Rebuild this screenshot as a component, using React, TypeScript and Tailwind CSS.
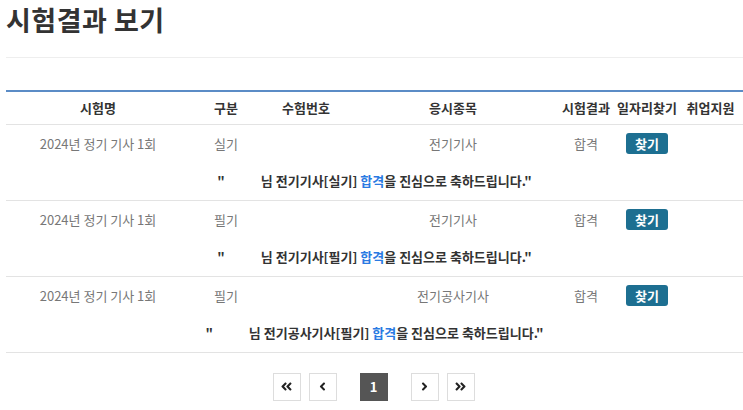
import React from 'react';
import { FaAngleDoubleLeft, FaAngleLeft, FaAngleRight, FaAngleDoubleRight } from 'react-icons/fa';

type Result = {
  round: string;
  kind: string;
  number: string;
  subject: string;
  result: string;
};

const results: Result[] = [
  { round: '2024년 정기 기사 1회', kind: '실기', number: '', subject: '전기기사', result: '합격' },
  { round: '2024년 정기 기사 1회', kind: '필기', number: '', subject: '전기기사', result: '합격' },
  { round: '2024년 정기 기사 1회', kind: '필기', number: '', subject: '전기공사기사', result: '합격' },
];

const headers = ['시험명', '구분', '수험번호', '응시종목', '시험결과', '일자리찾기', '취업지원'];

export default function App() {
  return (
    <div className="w-[743px] h-[410px] bg-white pl-[6px] text-[#333] overflow-hidden font-['Noto_Sans_CJK_KR','Noto_Sans',sans-serif]">
      {/* Title */}
      <h2 className="text-[27px] font-bold leading-[40px] text-[#333] tracking-[0.5px]">시험결과 보기</h2>
      <div className="mt-[17px] border-t border-[#eee]" />

      {/* Results table */}
      <table className="mt-[32px] w-[737px] table-fixed border-collapse text-[13px]">
        <colgroup>
          <col className="w-[184px]" />
          <col className="w-[72px]" />
          <col className="w-[88px]" />
          <col className="w-[206px]" />
          <col className="w-[60px]" />
          <col className="w-[62px]" />
          <col className="w-[65px]" />
        </colgroup>
        <thead>
          <tr className="border-t-2 border-[#5b8cc6] border-b border-b-[#e3e3e3]">
            {headers.map(h => (
              <th key={h} className="h-[33px] p-0 text-center font-bold text-[#333] whitespace-nowrap">{h}</th>
            ))}
          </tr>
        </thead>
        <tbody>
          {results.map((r, i) => (
            <React.Fragment key={i}>
              <tr className="text-[#777]">
                <td className="h-[38px] p-0 text-center">{r.round}</td>
                <td className="p-0 text-center">{r.kind}</td>
                <td className="p-0 text-center">{r.number}</td>
                <td className="p-0 text-center">{r.subject}</td>
                <td className="p-0 text-center">{r.result}</td>
                <td className="p-0 text-center">
                  <button className="w-[42px] h-[21px] rounded-[3px] bg-[#1d6f91] text-white text-[13px] font-bold leading-none">찾기</button>
                </td>
                <td className="p-0" />
              </tr>
              <tr className="border-b border-[#e3e3e3]">
                <td colSpan={7} className="h-[38px] p-0 text-center font-semibold text-[#333] whitespace-nowrap">
                  "<span className="inline-block w-[36px]" />님 {r.subject}[{r.kind}] <span className="text-[#2a7ae2]">{r.result}</span>을 진심으로 축하드립니다."
                </td>
              </tr>
            </React.Fragment>
          ))}
        </tbody>
      </table>

      {/* Pagination */}
      <div className="mt-[20px] flex justify-center gap-2 pr-[2px]">
        <button className="w-[28px] h-[28px] border border-[#ddd] bg-white flex items-center justify-center text-[#222]">
          <FaAngleDoubleLeft size={13} />
        </button>
        <button className="w-[28px] h-[28px] border border-[#ddd] bg-white flex items-center justify-center text-[#222]">
          <FaAngleLeft size={13} />
        </button>
        <button className="mx-[15px] w-[28px] h-[28px] bg-[#555] flex items-center justify-center text-white text-[13px] font-bold">1</button>
        <button className="w-[28px] h-[28px] border border-[#ddd] bg-white flex items-center justify-center text-[#222]">
          <FaAngleRight size={13} />
        </button>
        <button className="w-[28px] h-[28px] border border-[#ddd] bg-white flex items-center justify-center text-[#222]">
          <FaAngleDoubleRight size={13} />
        </button>
      </div>
    </div>
  );
}
